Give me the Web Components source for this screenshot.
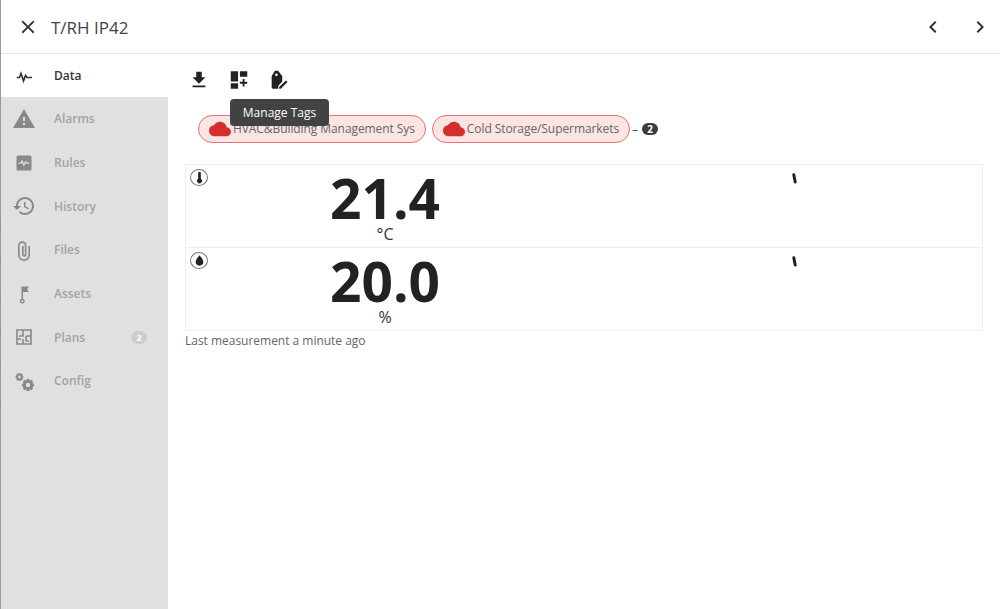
<!DOCTYPE html>
<html lang="en">
<head>
<meta charset="utf-8">
<title>T/RH IP42</title>
<style>
    html, body { margin: 0; height: 100%; overflow: hidden; }
    body { font-family: "Open Sans", sans-serif; color: #333; background: #fff; }
</style>
</head>
<body>

<template id="app-icon">
    <style>
        :host { display: inline-flex; width: var(--size, 24px); height: var(--size, 24px); color: inherit; }
        svg { width: 100%; height: 100%; fill: currentColor; fill-rule: evenodd; display: block; }
        svg.line { fill: none; stroke: currentColor; stroke-width: 1.6; }
    </style>
    <svg viewBox="0 0 24 24"><path></path></svg>
</template>

<template id="detail-header">
    <style>
        :host {
            display: flex; align-items: center; height: 54px; flex: none; box-sizing: border-box; padding-top: 1px;
            border-bottom: 1px solid #e4e4e4; color: #444;
        }
        .close { display: flex; margin-left: 16px; margin-right: 12px; color: #333; --size: 22px; }
        .title { flex: 1; font-size: 17px; }
        .arrows { display: flex; gap: 23px; margin-right: 8px; color: #333; }
    </style>
    <span class="close"><app-icon name="close"></app-icon></span>
    <span class="title"><slot></slot></span>
    <span class="arrows">
        <app-icon name="left"></app-icon>
        <app-icon name="right"></app-icon>
    </span>
</template>

<template id="nav-item">
    <style>
        :host {
            display: flex; align-items: center; height: 43.7px; padding-left: 11px;
            background: #e0e0e0; color: #a3a3a3; font-size: 12px; font-weight: 600;
        }
        :host([active]) { background: #fff; color: #333; height: 43px; }
        :host([active]) .icon { color: #333; }
        .icon { display: flex; color: #888; margin-right: 18px; }
        .label { flex: 1; }
        .badge {
            display: none; margin-right: 21px; min-width: 16px; height: 13px; line-height: 13px; border-radius: 7px;
            background: #cdcdcd; color: #fff; font-size: 9px; font-weight: 700; text-align: center;
        }
        :host([badge]) .badge { display: block; }
    </style>
    <span class="icon"><app-icon></app-icon></span>
    <span class="label"><slot></slot></span>
    <span class="badge"></span>
</template>

<template id="tag-chip">
    <style>
        :host {
            display: inline-flex; align-items: center; height: 28px; box-sizing: border-box; padding: 0 10px 2px 10px;
            border: 1px solid #e57373; border-radius: 14px; background: #fae4e4;
            color: #666; font-size: 12px; letter-spacing: -.08px; white-space: nowrap;
        }
        .cloud { display: flex; color: #d32f2f; --size: 22px; margin: 2px 2px 0 0; }
    </style>
    <span class="cloud"><app-icon name="cloud"></app-icon></span>
    <slot></slot>
</template>

<template id="measure-card">
    <style>
        :host {
            display: grid; grid-template-columns: 1fr 1fr; box-sizing: border-box; position: relative;
            height: 84px; border: 1px solid #eee; color: #222;
        }
        .badge {
            position: absolute; left: 4px; top: 4px; width: 18px; height: 17px; box-sizing: border-box;
            border: 1.5px solid #777; border-radius: 50%; display: flex; align-items: center; justify-content: center;
            --size: 13px; color: #222;
        }
        .value { display: flex; flex-direction: column; align-items: center; }
        .num { font-size: 55px; font-weight: 700; line-height: 50px; margin-top: 8px; }
        .unit { font-size: 16px; line-height: 18px; margin-top: 2px; color: #333; }
        .spark { padding: 8px 0 0 calc(50% + 8px); }
        .spark svg { display: block; width: 8px; height: 11px; }
    </style>
    <span class="badge"><app-icon></app-icon></span>
    <div class="value">
        <span class="num"></span>
        <span class="unit"></span>
    </div>
    <div class="spark">
        <svg viewBox="0 0 8 11"><path d="M2.800 1.800L4.200 9" stroke="#222" stroke-width="3" stroke-linecap="round" fill="none"></path></svg>
    </div>
</template>

<template id="device-panel">
    <style>
        :host {
            display: flex; flex-direction: column; height: 100vh; box-sizing: border-box; background: #fff;
            border-left: 1px solid #9a9a9a;
            border-image: linear-gradient(#9a9a9a 223px, #b98b5a 223px 229px, #9a9a9a 229px 258px, #b98b5a 258px 264px,
                #9a9a9a 264px 294px, #b98b5a 294px 300px, #9a9a9a 300px 329px, #b98b5a 329px 335px,
                #9a9a9a 335px 364px, #b98b5a 364px 370px, #9a9a9a 370px 400px, #b98b5a 400px 406px, #9a9a9a 406px) 1;
        }
        .body { flex: 1; display: flex; min-height: 0; }
        nav { width: 167px; flex: none; background: #e0e0e0; display: flex; flex-direction: column; }
        main { flex: 1; position: relative; padding: 0 17px; min-width: 0; }
        .tools { display: flex; gap: 18px; padding: 15px 0 0 3px; height: 22px; color: #222; --size: 22px; }
        .tags { display: flex; align-items: center; gap: 6px; margin: 24px 0 0 13px; height: 28px; }
        .more { display: flex; align-items: center; gap: 4px; font-size: 12px; color: #555; margin-left: -4px; }
        .count {
            display: inline-block; width: 16px; height: 12px; line-height: 12px; border-radius: 6px;
            background: #3c3c3c; color: #fff; font-size: 10px; font-weight: 700; text-align: center;
        }
        .cards { margin-top: 21px; width: 798px; }
        measure-card + measure-card { margin-top: -1px; }
        .last { font-size: 12px; color: #666; margin-top: 1px; letter-spacing: -.02px; }
        .tip {
            position: absolute; left: 62px; top: 45px; width: 99px; height: 27px; border-radius: 4px;
            background: #424242; color: #fff; font-size: 12px; display: flex; align-items: center; justify-content: center;
        }
    </style>
    <detail-header>T/RH IP42</detail-header>
    <div class="body">
        <nav>
            <nav-item icon="pulse" active>Data</nav-item>
            <nav-item icon="warning">Alarms</nav-item>
            <nav-item icon="rules">Rules</nav-item>
            <nav-item icon="history">History</nav-item>
            <nav-item icon="attach">Files</nav-item>
            <nav-item icon="flag">Assets</nav-item>
            <nav-item icon="plan" badge="2">Plans</nav-item>
            <nav-item icon="gears">Config</nav-item>
        </nav>
        <main>
            <div class="tools">
                <app-icon name="download"></app-icon>
                <app-icon name="dashboard"></app-icon>
                <app-icon name="tagedit"></app-icon>
            </div>
            <div class="tags">
                <tag-chip>HVAC&amp;Building Management Sys</tag-chip>
                <tag-chip>Cold Storage/Supermarkets</tag-chip>
                <span class="more">– <span class="count">2</span></span>
            </div>
            <div class="cards">
                <measure-card icon="thermo" value="21.4" unit="°C"></measure-card>
                <measure-card icon="drop" value="20.0" unit="%"></measure-card>
            </div>
            <div class="last">Last measurement a minute ago</div>
            <div class="tip">Manage Tags</div>
        </main>
    </div>
</template>

<device-panel></device-panel>

<script>
    // toothed wheel, used by the config icon
    function gear(cx, cy, ro, ri, hole, teeth) {
        let d = "";
        const step = Math.PI * 2 / teeth;
        for (let i = 0; i < teeth; i++) {
            const a = i * step;
            [[ri, -.5], [ro, -.28], [ro, .28], [ri, .5]].forEach(([r, k], j) => {
                const x = cx + r * Math.cos(a + k * step);
                const y = cy + r * Math.sin(a + k * step);
                d += (i === 0 && j === 0 ? "M" : "L") + x.toFixed(2) + " " + y.toFixed(2);
            });
        }
        d += `zM${cx - hole} ${cy}a${hole} ${hole} 0 1 0 ${hole * 2} 0a${hole} ${hole} 0 1 0 ${-hole * 2} 0z`;
        return d;
    }

    const ICONS = {
        close: "M19 6.41L17.59 5 12 10.59 6.41 5 5 6.41 10.59 12 5 17.59 6.41 19 12 13.41 17.59 19 19 17.59 13.41 12z",
        left: "M15.41 7.41L14 6l-6 6 6 6 1.41-1.41L10.83 12z",
        right: "M10 6L8.59 7.41 13.17 12l-4.58 4.59L10 18l6-6z",
        warning: "M1 21h22L12 2 1 21zm12-3h-2v-2h2v2zm0-4h-2v-4h2v4z",
        rules: "M6 4.500h12A1.500 1.500 0 0 1 19.500 6v12a1.500 1.500 0 0 1-1.500 1.500H6A1.500 1.500 0 0 1 4.500 18V6A1.500 1.500 0 0 1 6 4.500zM10 8.500l-1.500 3H6.500v1.200h2.700l.8-1.500 1.800 4.300 1.700-3.500.5.800h3.500v-1.300h-2.800l-1.200-2-1.500 3z",
        history: "M13 3c-4.970 0-9 4.030-9 9H1l3.890 3.890.070.140L9 12H6c0-3.870 3.130-7 7-7s7 3.130 7 7-3.130 7-7 7c-1.930 0-3.680-.790-4.940-2.060l-1.420 1.420C8.270 19.990 10.510 21 13 21c4.970 0 9-4.030 9-9s-4.030-9-9-9zm-1 5v5l4.280 2.540.720-1.210-3.500-2.080V8H12z",
        flag: "M9.500 4.500H17l-2 2.800 2 2.800h-6V16.700a2.500 2.500 0 1 1-1.500 0zM10.200 17.900a1.100 1.100 0 1 0 .1 0z",
        gears: gear(7.5, 8, 4, 2.9, 1.4, 8) + gear(16, 16, 6.2, 4.6, 2.2, 8),
        download: "M19 9h-4V3H9v6H5l7 7 7-7zM5 18v2h14v-2H5z",
        dashboard: "M3 2.500h8v11H3zM13 2.500h8v6h-8zM3 15.500h8v6H3zM18 11h-2v3h-3v2h3v3h2v-3h3v-2h-3z",
        tagedit: "M7.500 2h3.500l4.500 5.500v6.500l-4 4-.5 3.500H5.500A1.500 1.500 0 0 1 4 20V7.500zM9.200 5a1.400 1.400 0 1 0 0 2.800 1.400 1.400 0 0 0 0-2.800zM19.500 12.500l1.800 1.800-7.300 7.200h-1.800v-1.800z",
        cloud: "M19.350 10.040C18.670 6.590 15.640 4 12 4 9.110 4 6.600 5.640 5.350 8.040 2.340 8.360 0 10.910 0 14c0 3.310 2.690 6 6 6h13c2.760 0 5-2.240 5-5 0-2.640-2.050-4.780-4.650-4.960z",
        thermo: "M12 1.500a2.500 2.500 0 0 1 2.500 2.500v10.500a4.500 4.500 0 1 1-5 0V4A2.500 2.500 0 0 1 12 1.500z",
        drop: "M12 2.500c3.500 4.500 7 8 7 12a7 7 0 0 1-14 0c0-4 3.500-7.500 7-12z"
    };
    // drawn with a stroke instead of a fill
    const LINE_ICONS = {
        pulse: "M4.700 13.500H7.500L9 9.500l2.500 7.500 2-5.500 1.500 2H20",
        attach: "M17.200 8v9a5.200 5.200 0 0 1-10.400 0V7.500a3.400 3.400 0 0 1 6.800 0v9a1.400 1.400 0 0 1-2.800 0V8",
        plan: "M5 5h14v14H5zM11 5v6H7M5 14h4M11 14v5M14 11h5M14 11v5h3"
    };

    class AppIcon extends HTMLElement {
        static get observedAttributes() { return ["name"]; }
        constructor() {
            super();
            this.attachShadow({mode: "open"});
            this.shadowRoot.appendChild(document.getElementById("app-icon").content.cloneNode(true));
        }
        attributeChangedCallback() {
            const name = this.getAttribute("name");
            this.shadowRoot.querySelector("svg").classList.toggle("line", name in LINE_ICONS);
            this.shadowRoot.querySelector("path").setAttribute("d", ICONS[name] || LINE_ICONS[name] || "");
        }
    }
    customElements.define("app-icon", AppIcon);

    // plain shell elements: only clone the template
    class Shell extends HTMLElement {
        constructor(id) {
            super();
            this.attachShadow({mode: "open"});
            this.shadowRoot.appendChild(document.getElementById(id).content.cloneNode(true));
        }
    }

    customElements.define("detail-header", class extends Shell {
        constructor() { super("detail-header"); }
    });

    customElements.define("nav-item", class extends Shell {
        constructor() { super("nav-item"); }
        connectedCallback() {
            this.shadowRoot.querySelector("app-icon").setAttribute("name", this.getAttribute("icon"));
            this.shadowRoot.querySelector(".badge").textContent = this.getAttribute("badge") || "";
        }
    });

    customElements.define("tag-chip", class extends Shell {
        constructor() { super("tag-chip"); }
    });

    customElements.define("measure-card", class extends Shell {
        constructor() { super("measure-card"); }
        connectedCallback() {
            this.shadowRoot.querySelector("app-icon").setAttribute("name", this.getAttribute("icon"));
            this.shadowRoot.querySelector(".num").textContent = this.getAttribute("value");
            this.shadowRoot.querySelector(".unit").textContent = this.getAttribute("unit");
        }
    });

    customElements.define("device-panel", class extends Shell {
        constructor() { super("device-panel"); }
    });
</script>
</body>
</html>
